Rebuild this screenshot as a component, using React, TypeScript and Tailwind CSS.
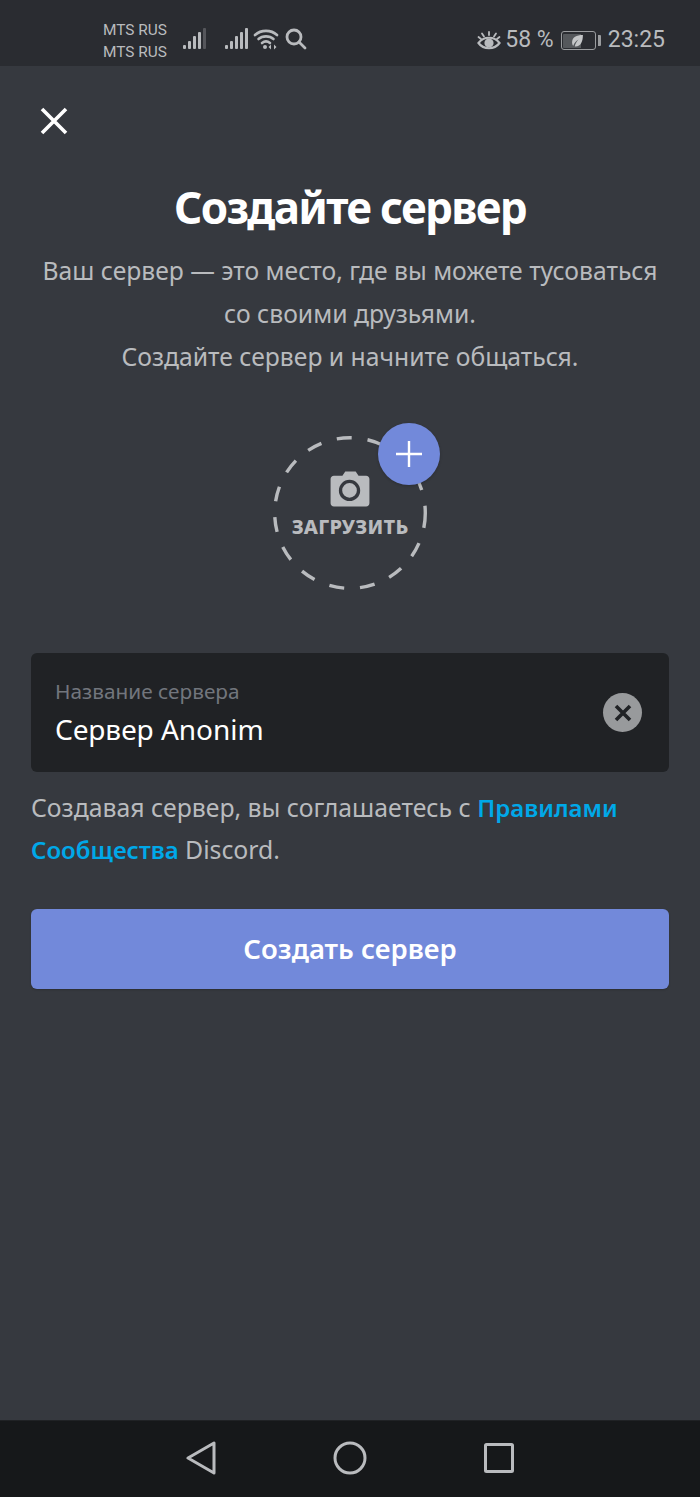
const Signal = ({ dimLast }: { dimLast?: boolean }) => (
  <svg width="24" height="24" viewBox="0 0 24 24" fill="#b9bbbe">
    <rect x="1" y="18" width="3" height="4" rx="1" />
    <rect x="6" y="14" width="3" height="8" rx="1" />
    <rect x="11" y="9" width="3" height="13" rx="1" />
    <rect x="16" y="5" width="3" height="17" rx="1" />
    <rect x="21" y="1" width="3" height="21" rx="1" opacity={dimLast ? 0.3 : 1} />
  </svg>
);

const StatusBar = () => (
  <div className="h-[66px] bg-[#2a2c31] flex items-center justify-between pl-[103px] pr-[35px] pt-[15px] text-[#b9bbbe] font-['Roboto',sans-serif]">
    <div className="flex items-center">
      <div className="flex flex-col text-[15.400px] leading-[22px] w-[79px]">
        <span>MTS RUS</span>
        <span>MTS RUS</span>
      </div>
      <div className="mr-[18px] mt-[-4px]">
        <Signal dimLast />
      </div>
      <div className="mt-[-4px]">
        <Signal />
      </div>
      <svg className="ml-[4px] mt-[-4px]" width="28" height="24" viewBox="0 0 26 24" fill="none" stroke="#b9bbbe" strokeWidth="2.600" strokeLinecap="round">
        <path d="M2 8c6-5.500 16-5.500 22 0" />
        <path d="M5.500 12c4-3.500 11-3.500 15 0" />
        <path d="M9 16c2.500-2 5.500-2 8 0" />
        <circle cx="12" cy="20" r="2" fill="#b9bbbe" stroke="none" />
        <path d="M18 17.500l-2.500 2.500 2.500 2.500zM21 17.500l2.500 2.500-2.500 2.500z" fill="#b9bbbe" stroke="none" />
      </svg>
      <svg className="ml-[5px] mt-[-4px]" width="22" height="24" viewBox="0 0 22 24" fill="none" stroke="#b9bbbe" strokeWidth="2.800" strokeLinecap="round">
        <circle cx="9" cy="10" r="7" />
        <path d="M14 15l6 6" />
      </svg>
    </div>
    <div className="flex items-center text-[23px]">
      <svg width="24" height="24" viewBox="0 0 24 24" fill="none" stroke="#b9bbbe" strokeWidth="2.200" strokeLinecap="round">
        <path d="M1.500 14c5-7 16-7 21 0-5 7-16 7-21 0z" />
        <circle cx="12" cy="14" r="3.500" fill="#b9bbbe" />
        <path d="M12 3v3M5 4.500l2 3M19 4.500l-2 3M1.500 8l2.500 2M22.500 8L20 10" strokeWidth="1.800" />
      </svg>
      <span className="ml-[4px]">58 %</span>
      <div className="ml-[7px] flex items-center">
        <div className="w-[35px] h-[19px] rounded-[3px] border border-[#9a9c9f] p-[1.500px] flex">
          <div className="w-[58%] bg-[#55585c] rounded-l-[1px] flex items-center justify-end">
            <svg className="mr-[-3px]" width="13" height="13" viewBox="0 0 12 12" fill="#c4c6c8">
              <path d="M11 1C5 1 1 3 1 8c0 1 .4 2 1 3 1-3 3-5 5-6-1.500 1.500-3 3.500-3.500 6.500C9 12 11 7 11 1z" />
            </svg>
          </div>
        </div>
        <div className="w-[3px] h-[11px] ml-[2px] bg-[#9a9c9f] rounded-r-[1px]" />
      </div>
      <span className="ml-[7px]">23:25</span>
    </div>
  </div>
);

const UploadCircle = () => (
  <div className="relative w-[156px] h-[156px] flex flex-col items-center text-[#b9bbbe]">
    <svg className="absolute inset-0" width="156" height="156" viewBox="0 0 156 156" fill="none">
      <circle cx="78" cy="78" r="75.300" stroke="#b9bbbe" strokeWidth="3.400" strokeDasharray="15 16" />
    </svg>
    <svg className="relative mt-[36px]" width="40" height="36" viewBox="0 0 42 38">
      <path fill="#b9bbbe" d="M4 5h9l3-4.500h11L30 5h8c2 0 3.500 1.500 3.500 3.500V34c0 2-1.500 3.500-3.500 3.500H4C2 37.500.500 36 .500 34V8.500C.500 6.500 2 5 4 5z" />
      <circle cx="20.500" cy="20.500" r="9.500" fill="#b9bbbe" stroke="#36393f" strokeWidth="3.500" />
    </svg>
    <span className="relative mt-[6px] text-[20px] leading-[28px] font-extrabold tracking-[0.2px] whitespace-nowrap">ЗАГРУЗИТЬ</span>
    <div className="absolute top-[-12px] right-[-12px] w-[62px] h-[62px] rounded-full bg-[#7289da] flex items-center justify-center shadow-[0_1px_3px_rgba(0,0,0,0.2)]">
      <svg width="28" height="28" viewBox="0 0 28 28" stroke="#ffffff" strokeWidth="2.400">
        <path d="M14 1v26M1 14h26" />
      </svg>
    </div>
  </div>
);

const NavBar = () => (
  <div className="h-[77px] bg-[#16181a] border-t border-[#202225] flex items-center justify-center gap-[117px] pb-[3px]">
    <svg width="30" height="34" viewBox="0 0 30 34" fill="none" stroke="#b9bbbe" strokeWidth="3" strokeLinejoin="round">
      <path d="M28 2v30L2 17z" />
    </svg>
    <svg width="34" height="34" viewBox="0 0 34 34" fill="none" stroke="#b9bbbe" strokeWidth="3">
      <circle cx="17" cy="17" r="15" />
    </svg>
    <svg width="30" height="30" viewBox="0 0 30 30" fill="none" stroke="#b9bbbe" strokeWidth="3" strokeLinejoin="round">
      <rect x="1.500" y="1.500" width="27" height="27" rx="1" />
    </svg>
  </div>
);

export default function App() {
  return (
    <div className="w-[700px] h-[1497px] flex flex-col bg-[#36393f] font-['Noto_Sans',sans-serif] overflow-hidden">
      <StatusBar />
      <div className="flex-1 flex flex-col px-[31px]">
        <button className="w-[30px] h-[30px] mt-[40px] ml-[8px]">
          <svg width="30" height="30" viewBox="0 0 30 30" stroke="#ffffff" strokeWidth="3.600">
            <path d="M3 3l24 24M27 3L3 27" />
          </svg>
        </button>
        <h1 className="mt-[41px] text-center text-[44px] leading-[60px] font-bold text-white tracking-[-1.700px]">Создайте сервер</h1>
        <p className="mt-[12px] text-center text-[#b9bbbe] text-[24.700px] leading-[43px] whitespace-nowrap">
          Ваш сервер — это место, где вы можете тусоваться
          <br />
          со своими друзьями.
          <br />
          Создайте сервер и начните общаться.
        </p>
        <div className="mt-[57px] flex justify-center">
          <UploadCircle />
        </div>
        <div className="mt-[62px] h-[119px] rounded-[6px] bg-[#202225] flex items-center justify-between pl-[24px] pr-[27px]">
          <div className="flex flex-col mt-[-1px]">
            <span className="text-[20.800px] leading-[26px] text-[#72767d]">Название сервера</span>
            <span className="mt-[7px] text-[28px] leading-[36px] text-white">Сервер Anonim</span>
          </div>
          <div className="w-[39px] h-[39px] rounded-full bg-[#989a9c] flex items-center justify-center">
            <svg width="20" height="20" viewBox="0 0 20 20" stroke="#202225" strokeWidth="3.600">
              <path d="M3 3l14 14M17 3L3 17" />
            </svg>
          </div>
        </div>
        <p className="mt-[14px] text-[24.800px] leading-[42px] text-[#b9bbbe]">
          Создавая сервер, вы соглашаетесь с <span className="text-[24px] leading-none font-semibold text-[#00a8e8]">Правилами</span>
          <br />
          <span className="text-[24px] leading-none font-semibold text-[#00a8e8]">Сообщества</span> Discord.
        </p>
        <button className="mt-[39px] h-[80px] rounded-[6px] bg-[#7289da] text-white text-[27.500px] font-semibold shadow-[0_1px_2px_rgba(0,0,0,0.2)]">
          Создать сервер
        </button>
      </div>
      <NavBar />
    </div>
  );
}
